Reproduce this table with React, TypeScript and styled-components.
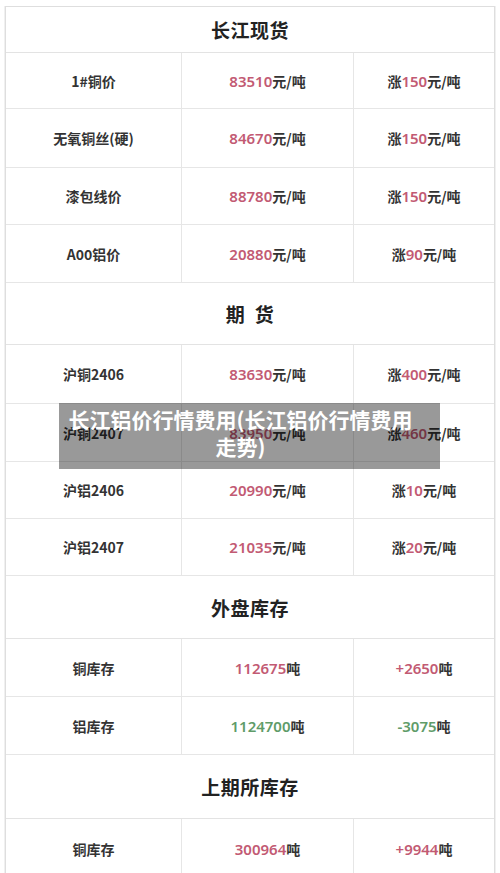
import React from "react";
import styled, { createGlobalStyle } from "styled-components";

const GlobalStyle = createGlobalStyle`
	html, body {
		margin: 0;
		padding: 0;
		background: #ffffff;
	}
	body {
		font-family: "Noto Sans CJK SC", "Noto Sans", sans-serif;
		color: #333333;
	}
`;

const Page = styled.div`
	position: relative;
	width: 500px;
	height: 873px;
	overflow: hidden;
	padding: 6px 5px 0 5px;
	box-sizing: border-box;
`;

const Table = styled.div`
	display: grid;
	grid-template-columns: 176px 172px 1fr;
	border-top: 1px solid #dedede;
	border-left: 1px solid #dedede;
	border-right: 1px solid #dedede;
	box-shadow: 1px 0 0 #f0f0f0, -1px 0 0 #f0f0f0;
`;

const Title = styled.div<{ $h: number }>`
	grid-column: 1 / span 3;
	height: ${p => p.$h}px;
	display: flex;
	align-items: center;
	justify-content: center;
	box-sizing: border-box;
	border-bottom: 1px solid #e3e3e3;
	font-size: 19px;
	font-weight: 700;
	color: #222222;
	letter-spacing: 0.5px;
	white-space: pre;
`;

const Cell = styled.div<{ $h: number; $last?: boolean }>`
	height: ${p => p.$h}px;
	display: flex;
	align-items: center;
	justify-content: center;
	box-sizing: border-box;
	border-bottom: 1px solid #e6e6e6;
	border-right: ${p => (p.$last ? "none" : "1px solid #e6e6e6")};
	font-size: 14px;
	font-weight: 700;
	color: #333333;
`;

const Num = styled.span<{ $tone: "up" | "down" }>`
	color: ${p => (p.$tone === "up" ? "#c25a73" : "#5f9c69")};
	font-family: "Noto Sans", "Noto Sans CJK SC", sans-serif;
	font-weight: 600;
	font-size: 15px;
`;

const Unit = styled.span`
	color: #333333;
	font-weight: 600;
`;

const Caption = styled.div`
	position: absolute;
	left: 59px;
	top: 403px;
	width: 381px;
	height: 66px;
	box-sizing: border-box;
	padding: 3px 18px 0 0;
	background: rgba(0, 0, 0, 0.4);
	color: #ffffff;
	font-size: 21px;
	font-weight: 700;
	line-height: 27px;
	text-align: center;
	white-space: nowrap;
`;

type Row = {
	label: string;
	value: string;
	valueUnit: string;
	changePrefix: string;
	change: string;
	changeUnit: string;
	tone: "up" | "down";
	h: number;
};

type Section = { title: string; h: number; rows: Row[] };

const sections: Section[] = [
	{
		title: "长江现货",
		h: 46,
		rows: [
			{ label: "1#铜价", value: "83510", valueUnit: "元/吨", changePrefix: "涨", change: "150", changeUnit: "元/吨", tone: "up", h: 56 },
			{ label: "无氧铜丝(硬)", value: "84670", valueUnit: "元/吨", changePrefix: "涨", change: "150", changeUnit: "元/吨", tone: "up", h: 59 },
			{ label: "漆包线价", value: "88780", valueUnit: "元/吨", changePrefix: "涨", change: "150", changeUnit: "元/吨", tone: "up", h: 57 },
			{ label: "A00铝价", value: "20880", valueUnit: "元/吨", changePrefix: "涨", change: "90", changeUnit: "元/吨", tone: "up", h: 58 }
		]
	},
	{
		title: "期  货",
		h: 62,
		rows: [
			{ label: "沪铜2406", value: "83630", valueUnit: "元/吨", changePrefix: "涨", change: "400", changeUnit: "元/吨", tone: "up", h: 59 },
			{ label: "沪铜2407", value: "83950", valueUnit: "元/吨", changePrefix: "涨", change: "460", changeUnit: "元/吨", tone: "up", h: 58 },
			{ label: "沪铝2406", value: "20990", valueUnit: "元/吨", changePrefix: "涨", change: "10", changeUnit: "元/吨", tone: "up", h: 57 },
			{ label: "沪铝2407", value: "21035", valueUnit: "元/吨", changePrefix: "涨", change: "20", changeUnit: "元/吨", tone: "up", h: 57 }
		]
	},
	{
		title: "外盘库存",
		h: 63,
		rows: [
			{ label: "铜库存", value: "112675", valueUnit: "吨", changePrefix: "", change: "+2650", changeUnit: "吨", tone: "up", h: 58 },
			{ label: "铝库存", value: "1124700", valueUnit: "吨", changePrefix: "", change: "-3075", changeUnit: "吨", tone: "down", h: 58 }
		]
	},
	{
		title: "上期所库存",
		h: 64,
		rows: [
			{ label: "铜库存", value: "300964", valueUnit: "吨", changePrefix: "", change: "+9944", changeUnit: "吨", tone: "up", h: 60 }
		]
	}
];

export default function App() {
	return (
		<>
			<GlobalStyle />
			<Page>
				<Table>
					{sections.map(section => (
						<React.Fragment key={section.title}>
							<Title $h={section.h}>{section.title}</Title>
							{section.rows.map(row => (
								<React.Fragment key={section.title + row.label}>
									<Cell $h={row.h}>{row.label}</Cell>
									<Cell $h={row.h}>
										<Num $tone={row.tone}>{row.value}</Num>
										<Unit>{row.valueUnit}</Unit>
									</Cell>
									<Cell $h={row.h} $last>
										<Unit>{row.changePrefix}</Unit>
										<Num $tone={row.tone}>{row.change}</Num>
										<Unit>{row.changeUnit}</Unit>
									</Cell>
								</React.Fragment>
							))}
						</React.Fragment>
					))}
				</Table>
				<Caption>
					长江铝价行情费用(长江铝价行情费用
					<br />
					走势)
				</Caption>
			</Page>
		</>
	);
}
